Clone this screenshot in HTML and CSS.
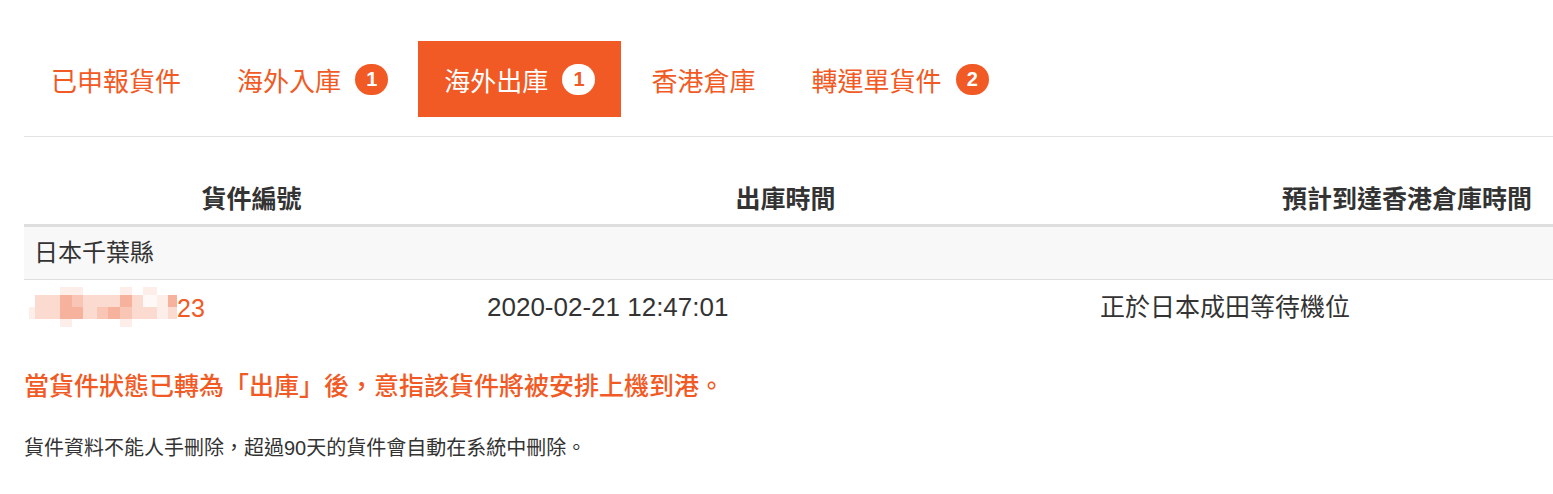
FILE: index.html
```html
<!DOCTYPE html>
<html lang="zh-Hant">
<head>
  <meta charset="UTF-8">
  <meta name="viewport" content="width=device-width, initial-scale=1.0">
  <title>海外出庫</title>
  <link rel="stylesheet" href="styles.css">
</head>
<body>

  <div class="page">
    <div class="tabs">
      <a class="tab first">已申報貨件</a>
      <a class="tab">海外入庫 <span class="badge">1</span></a>
      <a class="tab active">海外出庫 <span class="badge">1</span></a>
      <a class="tab">香港倉庫</a>
      <a class="tab">轉運單貨件 <span class="badge">2</span></a>
    </div>

    <table class="parcels">
      <thead>
        <tr>
          <th class="col-id">貨件編號</th>
          <th class="col-time">出庫時間</th>
          <th class="col-eta">預計到達香港倉庫時間</th>
        </tr>
      </thead>
      <tbody>
        <tr class="group">
          <td colspan="3">日本千葉縣</td>
        </tr>
        <tr class="item">
          <td>
            <span class="mosaic">
              <i></i><i></i><i></i><i class="m1"></i><i class="m1"></i><i></i><i></i><i></i><i class="m1"></i><i></i><i class="m1"></i><i></i><i></i>
              <i></i><i class="m2"></i><i class="m2"></i><i class="m4"></i><i class="m3"></i><i class="m2"></i><i class="m2"></i><i class="m2"></i><i class="m4"></i><i class="m2"></i><i class="m0"></i><i class="m1"></i><i class="m4"></i>
              <i class="m1"></i><i class="m2"></i><i class="m2"></i><i class="m4"></i><i class="m4"></i><i class="m2"></i><i class="m3"></i><i class="m4"></i><i class="m3"></i><i class="m2"></i><i class="m2"></i><i class="m1"></i><i class="m2"></i>
              <i></i><i></i><i></i><i class="m1"></i><i></i><i></i><i></i><i></i><i class="m1"></i><i></i><i></i><i></i><i></i>
            </span><a class="parcel-link">23</a>
          </td>
          <td class="date">2020-02-21 12:47:01</td>
          <td>正於日本成田等待機位</td>
        </tr>
      </tbody>
    </table>

    <p class="note-warn">當貨件狀態已轉為「出庫」後，意指該貨件將被安排上機到港。</p>
    <p class="note">貨件資料不能人手刪除，超過90天的貨件會自動在系統中刪除。</p>
  </div>

</body>
</html>
```

FILE: styles.css
```css
body { margin: 0; background: #fff; color: #333; font-family: "Liberation Sans", "Noto Sans CJK TC", sans-serif; }
.page { padding: 41px 0 0 24px; }

/* tabs */
.tabs { display: flex; gap: 4px; padding-bottom: 19px; border-bottom: 1px solid #e2e2e2; }
.tab { display: flex; align-items: center; height: 76px; padding: 0 26px; font-size: 26px; color: #f15a24; white-space: pre; cursor: pointer; }
.tab.first { margin-left: 1px; }
.tab.active { background: #f15a24; color: #fff; }
.badge { display: inline-flex; align-items: center; justify-content: center; min-width: 33px; height: 31px; margin-left: 7px; border-radius: 16px; background: #f15a24; color: #fff; font-size: 20px; font-weight: bold; }
.tab.active .badge { background: #fff; color: #f15a24; }

/* table */
.parcels { width: 100%; margin-top: 37px; border-collapse: collapse; }
.parcels th { padding: 13px 0; font-size: 25px; line-height: 24px; font-weight: bold; color: #333; border-bottom: 3px solid #dedede; }
.parcels .col-id { width: 455px; text-align: center; }
.parcels .col-time { width: 613px; text-align: center; }
.parcels .col-eta { text-align: right; padding-right: 21px; }
.parcels td { padding: 13px 8px; font-size: 25px; line-height: 26px; vertical-align: middle; }
.parcels td.date { font-size: 26px; }
.group td { padding: 14px 10px; font-size: 24px; line-height: 24px; background: #f8f8f8; border-bottom: 1px solid #dedede; }
.item td:first-child { padding-left: 5px; white-space: nowrap; }
.parcel-link { color: #f15a24; vertical-align: middle; }

/* blurred parcel number */
.mosaic { display: inline-grid; vertical-align: middle; margin: -8px 0 -6px; grid-template-columns: 6px 13px 12px 12px 11px 14px 11px 12px 12px 11px 14px 11px 9px; grid-template-rows: 8px 12px 12px 8px; }
.mosaic .m0 { background: #fef8f6; }
.mosaic .m1 { background: #fdeee9; }
.mosaic .m2 { background: #fbdacf; }
.mosaic .m3 { background: #f9c6b5; }
.mosaic .m4 { background: #f6b29c; }

/* notes */
.note-warn { margin: 36px 0 0; font-size: 25px; line-height: 32px; font-weight: 500; color: #f15a24; }
.note { margin: 32px 0 0; font-size: 20px; line-height: 28px; color: #333; }
```
